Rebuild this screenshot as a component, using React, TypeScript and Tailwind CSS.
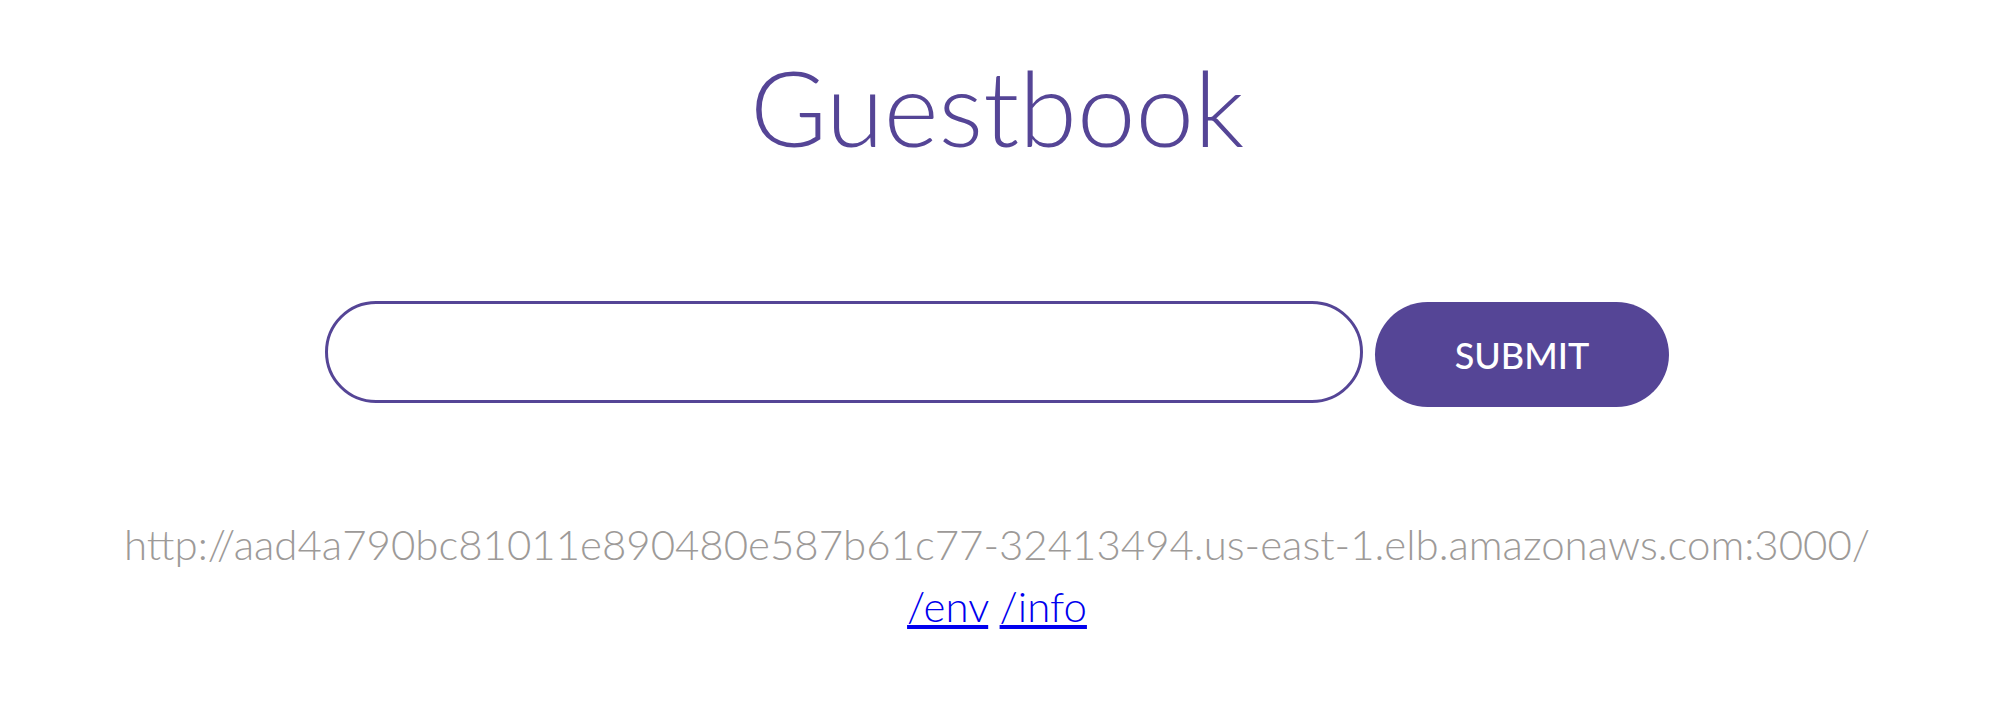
export default function App() {
  return (
    <div className="min-h-screen bg-white flex flex-col items-center font-['Lato','Open_Sans',sans-serif]">
      <h1 className="mt-[46px] text-[105px] leading-[120px] font-light text-[#554596]">Guestbook</h1>

      <form className="mt-[135px] flex items-start gap-3" onSubmit={(e) => e.preventDefault()}>
        <input
          type="text"
          className="w-[1038px] h-[102px] rounded-full border-[3px] border-[#554596] px-10 text-[32px] outline-none"
        />
        <button
          type="submit"
          className="mt-px w-[294px] h-[105px] rounded-full bg-[#554596] text-white text-[36px] font-medium"
        >
          SUBMIT
        </button>
      </form>

      <p className="mt-[106px] whitespace-nowrap text-[42px] leading-[62px] font-light text-[#9d9a98]">
        http://aad4a790bc81011e890480e587b61c77-32413494.us-east-1.elb.amazonaws.com:3000/
      </p>
      <p className="text-[42px] leading-[62px] font-light">
        <a href="/env" className="text-[#0000ee] underline">/env</a>{" "}
        <a href="/info" className="text-[#0000ee] underline">/info</a>
      </p>
    </div>
  );
}
